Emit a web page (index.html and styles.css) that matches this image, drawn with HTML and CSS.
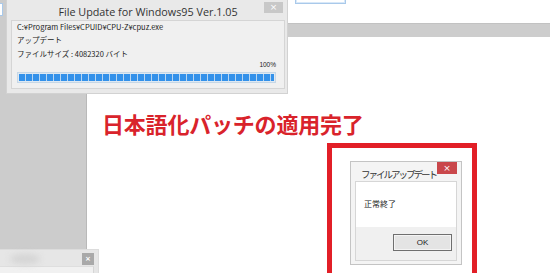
FILE: index.html
```html
<!DOCTYPE html>
<html lang="ja">
<head>
    <meta charset="UTF-8">
    <title>日本語化パッチの適用完了</title>
    <link rel="stylesheet" href="styles.css">
</head>
<body>
    <div id="desk">
        <div class="side"></div>
        <div class="main">
            <div class="band"></div>
            <h2 class="headline">日本語化パッチの適用完了</h2>
            <div class="shot">
                <div class="dlg">
                    <div class="dlg-title">
                        <span>ファイルアップデート</span>
                        <b class="dlg-close">×</b>
                    </div>
                    <div class="dlg-body">
                        <p class="dlg-msg">正常終了</p>
                        <div class="dlg-foot">
                            <span class="btn">OK</span>
                        </div>
                    </div>
                </div>
            </div>
        </div>

        <!-- 後ろのウィンドウの端 -->
        <div class="edge edge-l"></div>
        <div class="edge edge-r"></div>

        <!-- 更新ウィンドウ -->
        <div class="win">
            <div class="win-title">
                <span></span>
                <span class="win-name">File Update for Windows95 Ver.1.05</span>
                <b class="win-close">×</b>
            </div>
            <div class="win-body">
                <div class="ln ln1">C:¥Program Files¥CPUID¥CPU-Z¥cpuz.exe</div>
                <div class="ln">アップデート</div>
                <div class="ln">ファイルサイズ : 4082320 バイト</div>
                <div class="pct">100%</div>
                <div class="bar"><div class="bar-fill"></div></div>
            </div>
        </div>

        <!-- 下のウィンドウ -->
        <div class="win2">
            <div class="win2-title">
                <i class="blur"></i>
                <b class="win2-close">×</b>
            </div>
            <div class="win2-body"></div>
        </div>
    </div>
</body>
</html>
```

FILE: styles.css
```css
body {
    margin: 0;
    font-family: "Noto Sans CJK JP", sans-serif;
    color: #222;
}
#desk {
    position: relative;
    width: 550px;
    height: 273px;
    overflow: hidden;
    display: grid;
    grid-template-columns: 87px 1fr;
    background: #fff;
}
.side {
    background: #cccccc;
    border-right: 1px solid #b9b9b9;
}
.main {
    padding-top: 23px;
}
.band {
    height: 13px;
    background: #cdcdcd;
    border-top: 1px solid #c2c2c2;
}
.headline {
    margin: 74px 0 0 15px;
    font-size: 22px;
    line-height: 24px;
    font-weight: bold;
    color: #d9232b;
    letter-spacing: -0.2px;
}
.shot {
    margin: 8px 0 0 240px;
    width: 122px;
    height: 140px;
    border: 5px solid #e21f27;
    padding: 13px 0 0 18px;
    box-sizing: content-box;
}
.dlg {
    width: 102px;
    height: 99px;
    background: #f4f4f4;
    border: 1px solid #c4c4c4;
    padding: 0 4px 3px 4px;
    display: flex;
    flex-direction: column;
    box-sizing: content-box;
}
.dlg-title {
    height: 19px;
    display: flex;
    align-items: flex-start;
    justify-content: space-between;
}
.dlg-title span {
    font-size: 9.5px;
    letter-spacing: -2px;
    line-height: 12px;
    margin: 6px 0 0 6px;
    color: #333;
}
.dlg-close {
    width: 20px;
    height: 12px;
    background: #c9474b;
    color: #fff;
    font-size: 9px;
    line-height: 12px;
    text-align: center;
    font-weight: normal;
    font-family: "DejaVu Sans", sans-serif;
}
.dlg-body {
    flex: 1;
    border: 1px solid #d6d6d6;
    background: #fff;
    display: flex;
    flex-direction: column;
}
.dlg-msg {
    margin: 0;
    height: 45px;
    font-size: 8px;
    line-height: 10px;
    padding: 17px 0 0 8px;
    box-sizing: border-box;
}
.dlg-foot {
    flex: 1;
    background: #f0f0f0;
    display: flex;
    justify-content: flex-end;
    align-items: flex-start;
    padding: 7px 4px 0 0;
}
.btn {
    width: 57px;
    height: 15px;
    border: 1px solid #6f6f6f;
    background: #e4e4e4;
    box-shadow: inset 0 0 0 1px #f4f4f4;
    font-family: "Liberation Sans", sans-serif;
    font-size: 8px;
    line-height: 15px;
    text-align: center;
}

.edge {
    position: absolute;
    background: #fff;
    border: 1px solid #a9c9ea;
}
.edge-l {
    left: -10px;
    top: 3px;
    width: 11px;
    height: 11px;
}
.edge-r {
    left: 295px;
    top: -10px;
    width: 49px;
    height: 12px;
    box-shadow: inset 0 0 0 1px #d8e8f8;
}

.win {
    position: absolute;
    left: 6px;
    top: 0;
    width: 282px;
    height: 94px;
    box-sizing: border-box;
    background: #e9e9e9;
    border: 1px solid #d2d2d2;
    border-top: none;
    padding: 0 2px 4px 4px;
    display: flex;
    flex-direction: column;
}
.win-title {
    height: 20px;
    display: grid;
    grid-template-columns: 1fr auto 1fr;
    align-items: start;
}
.win-name {
    font-family: "Open Sans", sans-serif;
    font-size: 10.8px;
    line-height: 14px;
    margin-top: 5px;
    color: #333;
}
.win-close {
    justify-self: end;
    margin: 2px 2px 0 0;
    width: 19px;
    height: 11px;
    background: #c8c8c8;
    color: #fff;
    font-family: "DejaVu Sans", sans-serif;
    font-weight: normal;
    font-size: 9px;
    line-height: 11px;
    text-align: center;
}
.win-body {
    flex: 1;
    background: #f0f0f0;
    border: 1px solid #d5d5d5;
    padding: 0 8px 0 5px;
}
.ln {
    font-size: 7.5px;
    line-height: 14px;
    color: #222;
}
.ln1 {
    line-height: 12px;
}
.pct {
    text-align: right;
    font-size: 6.5px;
    line-height: 8px;
    font-family: "Liberation Sans", sans-serif;
}
.bar {
    margin-top: 3px;
    height: 11px;
    box-sizing: border-box;
    border: 1px solid #c6d7e6;
    background: #dfe9f2;
    padding: 1px;
}
.bar-fill {
    height: 100%;
    background: repeating-linear-gradient(90deg, #3391ea 0 6px, #b9d6f1 6px 7px);
}

.win2 {
    position: absolute;
    left: -1px;
    top: 249px;
    width: 100px;
    height: 40px;
    background: #e6e6e6;
    border: 1px solid #dcdcdc;
    box-sizing: border-box;
    padding-right: 4px;
}
.win2-title {
    height: 16px;
    display: flex;
    justify-content: space-between;
    align-items: flex-start;
}
.blur {
    margin: 4px 0 0 10px;
    width: 30px;
    height: 10px;
    background: #d4d4d4;
    border-radius: 50%;
    filter: blur(3px);
}
.win2-close {
    margin-top: 3px;
    width: 12px;
    height: 12px;
    background: #a9a9a9;
    color: #fff;
    font-size: 7px;
    line-height: 12px;
    text-align: center;
    font-family: "DejaVu Sans", sans-serif;
}
.win2-body {
    height: 30px;
    background: #f1f1f1;
    border-right: 1px solid #d6d6d6;
    border-top: 1px solid #dedede;
}
```
